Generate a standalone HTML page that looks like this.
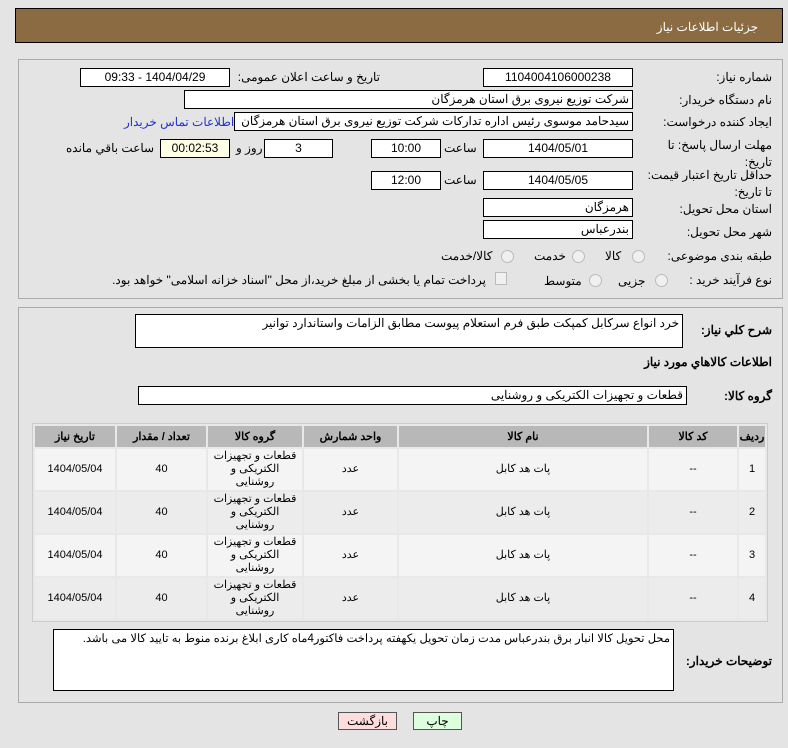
<!DOCTYPE html>
<html><head><meta charset="utf-8"><style>
body{margin:0;width:788px;height:748px;background:#e4e4e4;font-family:"Liberation Sans","Noto Sans CJK SC",sans-serif;font-size:12px;color:#000;position:relative;overflow:hidden;direction:rtl}
.a{position:absolute;white-space:nowrap;font-size:12px}
.in{position:absolute;background:#fff;border:1px solid #000;box-sizing:border-box;height:19px;line-height:17px;font-size:12px;padding:0 3px;white-space:nowrap;overflow:hidden}
.c{text-align:center}
.panel{position:absolute;left:18px;width:765px;border:1px solid #aaa;box-sizing:border-box}
table{position:absolute;left:32px;top:423px;width:736px;table-layout:fixed;border-collapse:separate;border-spacing:2px;background:#e8e8e8;border:1px solid #ccc;direction:rtl}
th{background:#b8b8b8;height:21px;font-size:11px;font-weight:bold;padding:0}
td{background:#f4f4f4;height:41px;padding:0;text-align:center;font-size:11px;line-height:13px}
tr.e td{background:#ececec}
.rad{position:absolute;width:11px;height:11px;border-radius:50%;border:1px solid #bbb;background:#f0f0f0}
.btn{position:absolute;height:18px;border:1px solid #555;box-sizing:border-box;text-align:center;line-height:16px;font-size:12px}
</style></head><body>
<div class="a" style="left:15px;top:8px;width:768px;height:35px;background:#8b6b42;border:1px solid #000;box-sizing:border-box"></div>
<div class="a" style="right:30px;top:20px;color:#fff">جزئیات اطلاعات نیاز</div>

<div class="panel" style="top:59px;height:240px"></div>
<div class="a" style="right:16px;top:70px">شماره نیاز:</div>
<div class="in c" style="left:483px;top:68px;width:150px">1104004106000238</div>
<div class="a" style="left:236px;top:70px;width:144px;text-align:right">تاریخ و ساعت اعلان عمومی:</div>
<div class="in c" style="left:80px;top:68px;width:150px">1404/04/29 - 09:33</div>

<div class="a" style="right:16px;top:93px">نام دستگاه خریدار:</div>
<div class="in" style="left:184px;top:90px;width:449px">شرکت توزیع نیروی برق استان هرمزگان</div>

<div class="a" style="right:16px;top:115px">ایجاد کننده درخواست:</div>
<div class="in" style="left:234px;top:112px;width:399px">سیدحامد موسوی رئیس اداره تدارکات شرکت توزیع نیروی برق استان هرمزگان</div>
<div class="a" style="left:124px;top:115px;color:#2233cc">اطلاعات تماس خریدار</div>

<div class="a" style="right:16px;top:137px;line-height:17px;text-align:right">مهلت ارسال پاسخ: تا<br>تاریخ:</div>
<div class="in c" style="left:483px;top:139px;width:150px">1404/05/01</div>
<div class="a" style="left:444px;top:141px">ساعت</div>
<div class="in c" style="left:371px;top:139px;width:70px">10:00</div>
<div class="in c" style="left:264px;top:139px;width:69px">3</div>
<div class="a" style="left:236px;top:141px">روز و</div>
<div class="in c" style="left:160px;top:139px;width:70px;background:#ffffe6">00:02:53</div>
<div class="a" style="left:66px;top:141px">ساعت باقي مانده</div>

<div class="a" style="right:16px;top:167px;line-height:17px;text-align:right">حداقل تاریخ اعتبار قیمت:<br>تا تاریخ:</div>
<div class="in c" style="left:483px;top:171px;width:150px">1404/05/05</div>
<div class="a" style="left:444px;top:173px">ساعت</div>
<div class="in c" style="left:371px;top:171px;width:70px">12:00</div>

<div class="a" style="right:16px;top:202px">استان محل تحویل:</div>
<div class="in" style="left:483px;top:198px;width:150px">هرمزگان</div>
<div class="a" style="right:16px;top:225px">شهر محل تحویل:</div>
<div class="in" style="left:483px;top:220px;width:150px">بندرعباس</div>

<div class="a" style="right:16px;top:249px">طبقه بندی موضوعی:</div>
<div class="rad" style="left:632px;top:250px"></div><div class="a" style="left:605px;top:249px">کالا</div>
<div class="rad" style="left:572px;top:250px"></div><div class="a" style="left:534px;top:249px">خدمت</div>
<div class="rad" style="left:501px;top:250px"></div><div class="a" style="left:441px;top:249px">کالا/خدمت</div>

<div class="a" style="right:16px;top:273px">نوع فرآیند خرید :</div>
<div class="rad" style="left:655px;top:274px"></div><div class="a" style="left:618px;top:274px">جزیی</div>
<div class="rad" style="left:589px;top:274px"></div><div class="a" style="left:544px;top:274px">متوسط</div>
<div class="a" style="left:495px;top:272px;width:10px;height:11px;border:1px solid #bbb;background:#f0f0f0"></div>
<div class="a" style="left:102px;top:273px;width:384px;text-align:right;overflow:hidden">پرداخت تمام یا بخشی از مبلغ خرید،از محل "اسناد خزانه اسلامی" خواهد بود.</div>

<div class="panel" style="top:307px;height:396px"></div>
<div class="a" style="right:16px;top:323px;font-weight:bold">شرح کلي نیاز:</div>
<div class="in" style="left:135px;top:314px;width:548px;height:34px">خرد انواع سرکابل کمپکت طبق فرم استعلام پیوست مطابق الزامات واستاندارد توانیر</div>
<div class="a" style="right:16px;top:355px;font-weight:bold">اطلاعات کالاهاي مورد نیاز</div>
<div class="a" style="right:16px;top:389px;font-weight:bold">گروه کالا:</div>
<div class="in" style="left:138px;top:386px;width:549px">قطعات و تجهیزات الکتریکی و روشنایی</div>

<table>
<colgroup><col style="width:26px"><col style="width:88px"><col style="width:248px"><col style="width:93px"><col style="width:94px"><col style="width:89px"><col></colgroup>
<tr><th>ردیف</th><th>کد کالا</th><th>نام کالا</th><th>واحد شمارش</th><th>گروه کالا</th><th>تعداد / مقدار</th><th>تاریخ نیاز</th></tr>
<tr><td>1</td><td>--</td><td>پات هد کابل</td><td>عدد</td><td>قطعات و تجهیزات<br>الکتریکی و<br>روشنایی</td><td>40</td><td>1404/05/04</td></tr>
<tr class="e"><td>2</td><td>--</td><td>پات هد کابل</td><td>عدد</td><td>قطعات و تجهیزات<br>الکتریکی و<br>روشنایی</td><td>40</td><td>1404/05/04</td></tr>
<tr><td>3</td><td>--</td><td>پات هد کابل</td><td>عدد</td><td>قطعات و تجهیزات<br>الکتریکی و<br>روشنایی</td><td>40</td><td>1404/05/04</td></tr>
<tr class="e"><td>4</td><td>--</td><td>پات هد کابل</td><td>عدد</td><td>قطعات و تجهیزات<br>الکتریکی و<br>روشنایی</td><td>40</td><td>1404/05/04</td></tr>
</table>

<div class="a" style="right:16px;top:654px;font-weight:bold">توضیحات خریدار:</div>
<div class="in" style="left:53px;top:629px;width:621px;height:62px;white-space:normal;line-height:18px;font-size:11.5px">محل تحویل کالا انبار برق بندرعباس مدت زمان تحویل یکهفته پرداخت فاکتور4ماه کاری ابلاغ برنده منوط به تایید کالا می باشد.</div>

<div class="btn" style="left:338px;top:712px;width:59px;background:#fdd">بازگشت</div>
<div class="btn" style="left:413px;top:712px;width:49px;background:#dfd">چاپ</div>
</body></html>
